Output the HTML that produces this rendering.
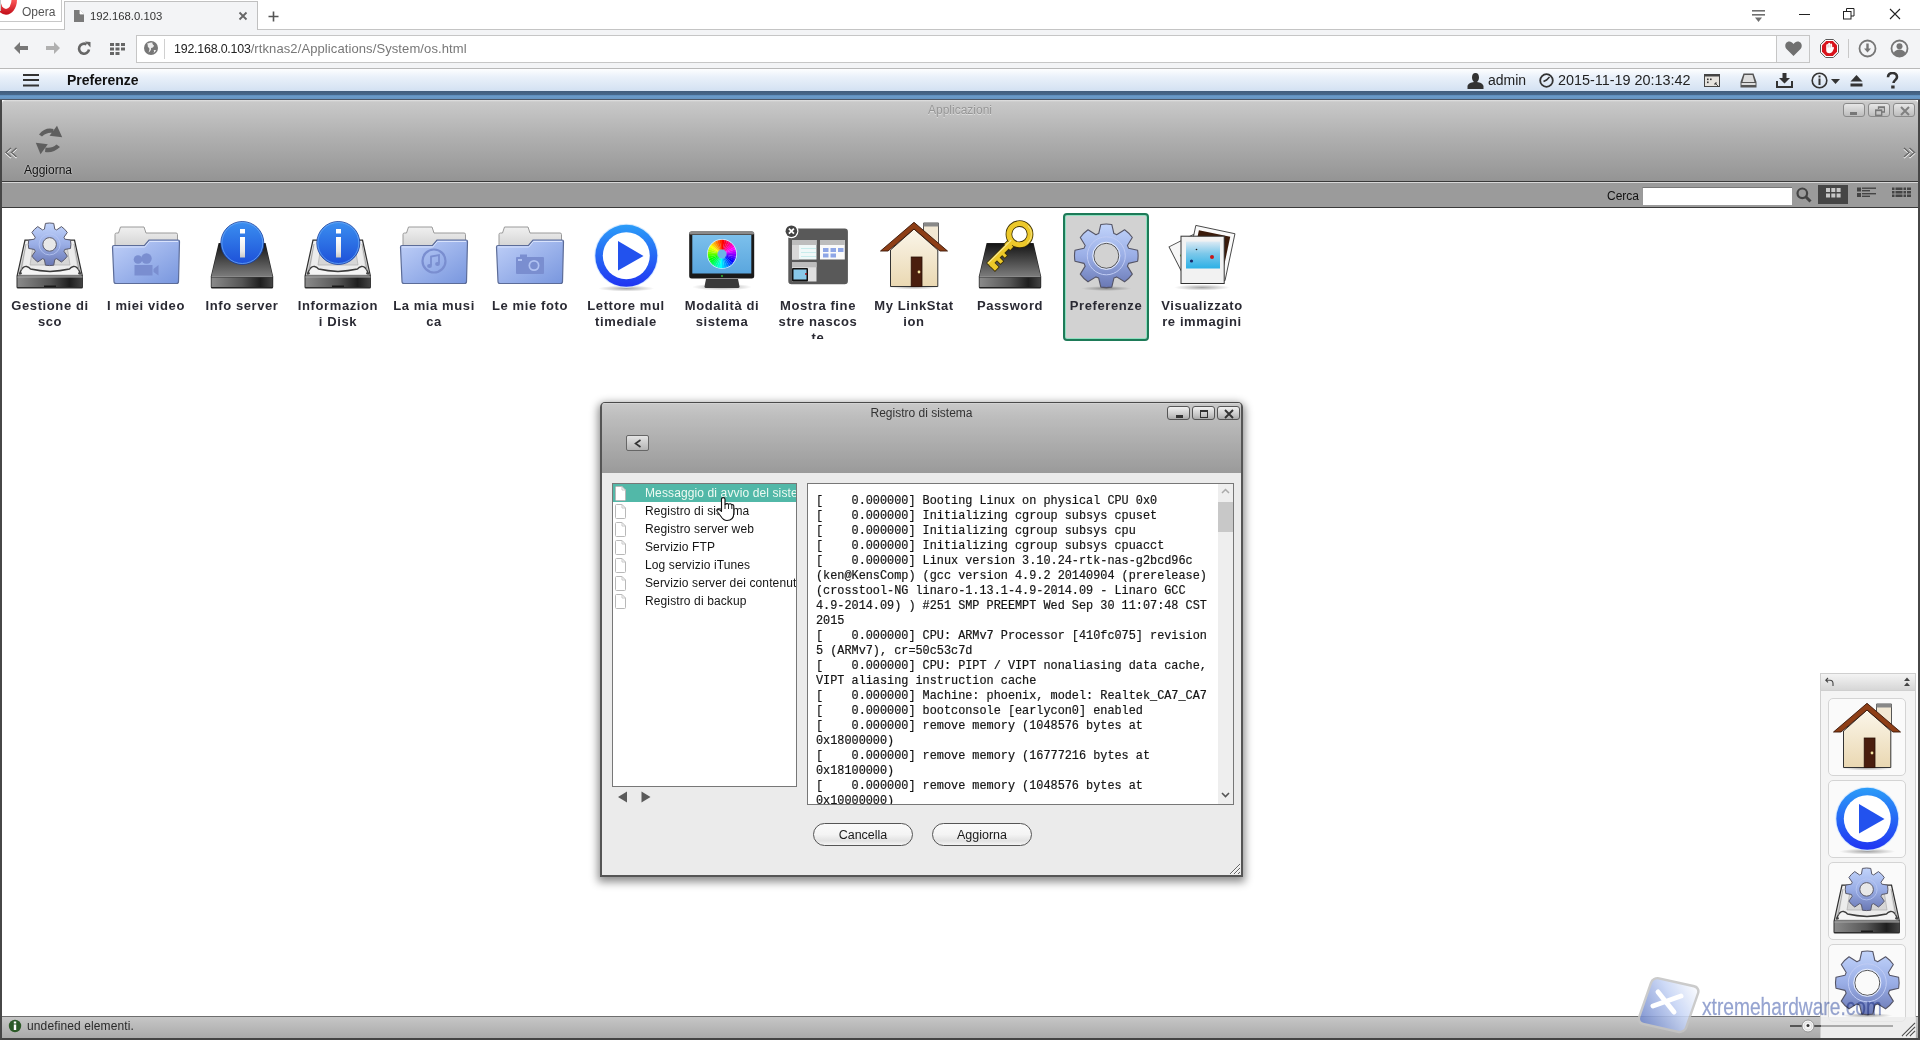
<!DOCTYPE html>
<html><head><meta charset="utf-8">
<style>
*{box-sizing:border-box;margin:0;padding:0}
html,body{width:1920px;height:1040px;overflow:hidden;background:#fff;font-family:"Liberation Sans",sans-serif;position:relative}
.a{position:absolute}
/* browser chrome */
#tabstrip{left:0;top:0;width:1920px;height:30px;background:#fff;border-bottom:1px solid #c4c4c4}
#toolbar{left:0;top:30px;width:1920px;height:39px;background:#f3f4f6;border-bottom:1px solid #b9b9b9}
#nashead{left:0;top:69px;width:1920px;height:22px;background:linear-gradient(#fdfeff 0,#eaf1fa 35%,#d3e1f2 100%)}
#bluebar{left:0;top:91px;width:1920px;height:9px;background:linear-gradient(#415c7b 0,#47678a 40%,#5f8fbe 50%,#6b9ac8 60%,#6593c0 88%,#4d5868 89%,#4d5868 100%)}
#win{left:0;top:100px;width:1920px;height:940px;background:#fff}
#wintool{left:2px;top:100px;width:1916px;height:81px;background:linear-gradient(#e2e2e2 0,#c9c9c9 2px,#b0b0b0 45%,#949494 100%);border-radius:4px 4px 0 0}
#search{left:2px;top:181px;width:1916px;height:27px;background:#9b9b9b;border-top:1px solid #3a3a3a;border-bottom:1px solid #3a3a3a;box-shadow:inset 0 1px 0 #d8d8d8}
#leftedge{left:0;top:100px;width:2px;height:940px;background:#474747}
#rightedge{left:1918px;top:100px;width:2px;height:940px;background:#474747}
#status{left:2px;top:1016px;width:1916px;height:24px;background:linear-gradient(#c2c2c2,#9f9f9f);border-top:1px solid #7a7a7a}
.wbtn{width:22px;height:14px;border:1px solid #8a8a8a;border-radius:3px;background:linear-gradient(#e6e6e6,#bcbcbc)}
.lbl{width:96px;text-align:center;font-size:13px;font-weight:bold;color:#2a2a33;line-height:16px;letter-spacing:0.6px}
.wbtn2{width:23px;height:14px;border:1px solid #555;border-radius:3px;background:linear-gradient(#f0f0f0,#c4c4c4 70%,#aaa)}
.pill{width:100px;height:23px;border:1px solid #555;border-radius:12px;background:linear-gradient(#fafafa,#f4f4f4 50%,#e2e2e2 80%,#f4f4f4);text-align:center;font-size:12.5px;line-height:22px;color:#1a1a1a}
</style></head><body>
<div id="tabstrip" class="a"></div>
<div id="toolbar" class="a"></div>
<div id="nashead" class="a"></div>
<div id="bluebar" class="a"></div>

<!-- tab strip -->
<div class="a" style="left:0;top:0;width:62px;height:22px;border:1px solid #c8c8c8;border-left:none;border-top:none;background:#fff"></div>
<svg class="a" style="left:0;top:0" width="18" height="17" viewBox="0 0 18 17"><defs><linearGradient id="og" x1="0" y1="0" x2="0" y2="1"><stop offset="0" stop-color="#ff5a5a"/><stop offset="1" stop-color="#c00c18"/></linearGradient></defs><path d="M-5 -0.5A11 15.3 0 0 0 17 -0.5Z" fill="url(#og)"/><path d="M0.5 -0.5A5.5 9.5 0 0 0 11.5 -0.5Z" fill="#fff"/><rect x="0" y="0" width="1" height="11" fill="#c8c8c8"/></svg>
<div class="a" style="left:22px;top:5px;font-size:12px;color:#555">Opera</div>
<div class="a" style="left:64px;top:1px;width:194px;height:29px;background:#f3f4f6;border:1px solid #c0c0c0;border-bottom:none"></div>
<svg class="a" style="left:74px;top:10px" width="10" height="12" viewBox="0 0 10 12"><path d="M0 0H6L10 4V12H0Z" fill="#7a7a7a"/><path d="M6 0V4H10" fill="#fff" stroke="#fff" stroke-width="0.8"/></svg>
<div class="a" style="left:90px;top:10px;font-size:11.3px;color:#333">192.168.0.103</div>
<svg class="a" style="left:238px;top:11px" width="10" height="10" viewBox="0 0 10 10"><path d="M1.5 1.5L8.5 8.5M8.5 1.5L1.5 8.5" stroke="#666" stroke-width="1.8"/></svg>
<svg class="a" style="left:268px;top:11px" width="11" height="11" viewBox="0 0 11 11"><path d="M5.5 0.5V10.5M0.5 5.5H10.5" stroke="#555" stroke-width="1.6"/></svg>
<svg class="a" style="left:1752px;top:10px" width="14" height="13" viewBox="0 0 14 13"><rect x="0" y="0" width="13" height="1.6" fill="#6f6f6f"/><rect x="0" y="4" width="13" height="1.6" fill="#6f6f6f"/><path d="M3 7.5H10L6.5 12Z" fill="#6f6f6f"/></svg>
<div class="a" style="left:1799px;top:14px;width:11px;height:1px;background:#222"></div>
<svg class="a" style="left:1843px;top:8px" width="12" height="12" viewBox="0 0 12 12"><rect x="0.5" y="3.5" width="7.5" height="7.5" fill="none" stroke="#222"/><path d="M3.5 3.5V0.5H11V8H8" fill="none" stroke="#222"/></svg>
<svg class="a" style="left:1889px;top:8px" width="12" height="12" viewBox="0 0 12 12"><path d="M1 1L11 11M11 1L1 11" stroke="#222" stroke-width="1.1"/></svg>
<!-- toolbar icons -->
<svg class="a" style="left:14px;top:42px" width="15" height="12" viewBox="0 0 15 12"><path d="M0 6L6 0V4H14V8H6V12Z" fill="#777"/></svg>
<svg class="a" style="left:45px;top:42px" width="15" height="12" viewBox="0 0 15 12"><path d="M15 6L9 0V4H1V8H9V12Z" fill="#b0b0b0"/></svg>
<svg class="a" style="left:77px;top:41px" width="15" height="15" viewBox="0 0 15 15"><path d="M12 8.5A5 5 0 1 1 9.5 3.3" fill="none" stroke="#666" stroke-width="2.6"/><path d="M8 0.5L13.5 1V6.5Z" fill="#666"/></svg>
<svg class="a" style="left:110px;top:43px" width="15" height="12" viewBox="0 0 15 12"><g fill="#666"><rect x="0" y="0" width="4" height="3"/><rect x="5.5" y="0" width="4" height="3"/><rect x="11" y="0" width="4" height="3"/><rect x="0" y="4.5" width="4" height="3"/><rect x="5.5" y="4.5" width="4" height="3"/><rect x="11" y="4.5" width="4" height="3"/><rect x="0" y="9" width="4" height="3"/><rect x="5.5" y="9" width="4" height="3"/></g></svg>
<div class="a" style="left:136px;top:35px;width:1641px;height:28px;background:#fff;border:1px solid #c6c6c6"></div>
<div class="a" style="left:1776px;top:35px;width:34px;height:28px;background:#f3f4f6;border:1px solid #c6c6c6"></div>
<svg class="a" style="left:143px;top:40px" width="16" height="16" viewBox="0 0 16 16"><circle cx="8" cy="8" r="7" fill="#777"/><path d="M4 3.5C5.5 5 4 6.5 5.5 7.5C7 8.5 6.5 10 5.5 12.5C7.5 11 8.5 9.5 8 8C10 8 10.5 7 11 5.5C9.5 4.5 9 3 9.5 2.5C7.5 2.5 6 3 4 3.5Z" fill="#eee"/><path d="M10.5 10C11.5 11 11 12.5 10 13C11.5 12.5 12.5 11.5 13 10Z" fill="#eee"/></svg>
<div class="a" style="left:164px;top:39px;width:1px;height:20px;background:#d0d0d0"></div>
<div class="a" style="left:174px;top:41px;font-size:13px;color:#222;white-space:pre"><span style="font-size:12.4px;letter-spacing:-0.2px">192.168.0.103</span><span style="color:#777;letter-spacing:0.1px">/rtknas2/Applications/System/os.html</span></div>
<svg class="a" style="left:1785px;top:41px" width="17" height="15" viewBox="0 0 17 15"><path d="M8.5 15L1.5 8C-0.5 6 0 2 2.5 1C4.8 0 7 1 8.5 3C10 1 12.2 0 14.5 1C17 2 17.5 6 15.5 8Z" fill="#707070"/></svg>
<svg class="a" style="left:1820px;top:39px" width="20" height="20" viewBox="0 0 20 20"><path d="M5.6 0.5H13.4L18.5 5.6V13.4L13.4 18.5H5.6L0.5 13.4V5.6Z" fill="#fff" stroke="#5a5a5a" stroke-width="1"/><path d="M6.2 2H12.8L17 6.2V12.8L12.8 17H6.2L2 12.8V6.2Z" fill="#d8141c"/><path d="M6.2 6.5Q6.2 5 7.2 5Q8 5 8.1 6V5Q8.2 3.8 9.2 3.8Q10.2 3.8 10.2 5V5.5Q10.4 4.5 11.3 4.6Q12.2 4.7 12.2 6V8.5Q12.6 7.6 13.4 7.9Q14.3 8.3 13.9 9.5L12.5 12.5Q11.5 14.2 9.5 14.2Q6.2 14.2 6.2 11Z" fill="#fff"/><path d="M8.1 6V8.5M10.2 5.5V8.5" stroke="#c8a0a0" stroke-width="0.7"/></svg>
<div class="a" style="left:1848px;top:39px;width:1px;height:19px;background:#c8c8c8"></div>
<svg class="a" style="left:1858px;top:39px" width="19" height="19" viewBox="0 0 19 19"><circle cx="9.5" cy="9.5" r="8" fill="none" stroke="#767676" stroke-width="1.8"/><path d="M8.3 4.5H10.7V9.5H13L9.5 13.5L6 9.5H8.3Z" fill="#767676"/></svg>
<svg class="a" style="left:1890px;top:39px" width="19" height="19" viewBox="0 0 19 19"><circle cx="9.5" cy="9.5" r="8" fill="none" stroke="#767676" stroke-width="1.8"/><circle cx="9.5" cy="7.2" r="3" fill="#767676"/><path d="M3.5 14.5C4.5 11.5 7 10.5 9.5 10.5C12 10.5 14.5 11.5 15.5 14.5C14 16.5 12 17.5 9.5 17.5C7 17.5 5 16.5 3.5 14.5Z" fill="#767676"/></svg>
<!-- NAS header -->
<svg class="a" style="left:23px;top:74px" width="16" height="13" viewBox="0 0 16 13"><rect x="0" y="0" width="16" height="2" fill="#333"/><rect x="0" y="5" width="16" height="2" fill="#333"/><rect x="0" y="10.5" width="16" height="2" fill="#333"/></svg>
<div class="a" style="left:67px;top:72px;font-size:14px;font-weight:bold;color:#111">Preferenze</div>
<svg class="a" style="left:1467px;top:73px" width="17" height="16" viewBox="0 0 17 16"><path d="M8.5 0C6 0 5 2 5 4.5C5 6.5 6 8 7 9C4 9.5 1 10.5 0.5 13V16H16.5V13C16 10.5 13 9.5 10 9C11 8 12 6.5 12 4.5C12 2 11 0 8.5 0Z" fill="#333"/></svg>
<div class="a" style="left:1488px;top:72px;font-size:14px;color:#222">admin</div>
<svg class="a" style="left:1539px;top:73px" width="15" height="15" viewBox="0 0 15 15"><circle cx="7.5" cy="7.5" r="6.3" fill="none" stroke="#333" stroke-width="1.8"/><path d="M4.5 8.5L7.5 7L10.5 4" fill="none" stroke="#333" stroke-width="1.6"/></svg>
<div class="a" style="left:1558px;top:72px;font-size:14.4px;color:#222">2015-11-19 20:13:42</div>
<svg class="a" style="left:1704px;top:74px" width="17" height="14" viewBox="0 0 17 14"><rect x="0.5" y="0.5" width="15" height="12" fill="#e6e3de" stroke="#444"/><rect x="0.5" y="0.5" width="15" height="2" fill="#444"/><rect x="3" y="4.5" width="1.6" height="1.6" fill="#333"/><rect x="6" y="4.5" width="1.6" height="1.6" fill="#333"/><rect x="3" y="7.5" width="1.6" height="1.6" fill="#333"/><path d="M11 9L14.5 12.5M11 9V11M11 9H13" stroke="#333" stroke-width="0.9" fill="none"/></svg>
<svg class="a" style="left:1740px;top:73px" width="17" height="15" viewBox="0 0 17 15"><path d="M3.5 0.5H13.5L16.5 9V14.5H0.5V9Z" fill="#555"/><path d="M4.5 2H12.5L14.5 9H2.5Z" fill="#ddd"/><rect x="1.5" y="10" width="14" height="2" fill="#ddd"/></svg>
<svg class="a" style="left:1776px;top:73px" width="17" height="15" viewBox="0 0 17 15"><path d="M6.5 0H10.5V5H14L8.5 10.5L3 5H6.5Z" fill="#333"/><path d="M1 8V14H16V8" fill="none" stroke="#333" stroke-width="2"/></svg>
<svg class="a" style="left:1811px;top:72px" width="30" height="17" viewBox="0 0 30 17"><circle cx="8.5" cy="8.5" r="7.3" fill="none" stroke="#333" stroke-width="1.6"/><rect x="7.5" y="6.5" width="2" height="6.5" fill="#333"/><rect x="7.5" y="3.5" width="2" height="2" fill="#333"/><path d="M20 7H29L24.5 12Z" fill="#333"/></svg>
<svg class="a" style="left:1850px;top:75px" width="13" height="12" viewBox="0 0 13 12"><path d="M6.5 0L12.5 6.5H0.5Z" fill="#333"/><rect x="0.5" y="8.5" width="12" height="3" fill="#333"/></svg>
<svg class="a" style="left:1886px;top:72px" width="13" height="17" viewBox="0 0 13 17"><path d="M2 5.2C2 2.5 4 1 6.5 1C9 1 11 2.5 11 5C11 8 7.5 8.2 7.5 11" fill="none" stroke="#333" stroke-width="2.6"/><rect x="5.2" y="13.5" width="3.4" height="3" fill="#333"/></svg>
<div id="win" class="a"></div>
<div id="wintool" class="a"></div>
<div id="search" class="a"></div>

<div class="a" style="left:902px;top:103px;width:116px;text-align:center;font-size:12px;color:#979797;text-shadow:0 1px 0 #ddd">Applicazioni</div>
<div class="a wbtn" style="left:1843px;top:103px"><div style="position:absolute;left:6px;top:8px;width:7px;height:3px;background:#777"></div></div>
<div class="a wbtn" style="left:1868px;top:103px"><svg style="position:absolute;left:6px;top:2px" width="10" height="10" viewBox="0 0 10 10"><path d="M3.5 3V1H9.5V6H7" fill="none" stroke="#777" stroke-width="1.3"/><rect x="0.7" y="4" width="6" height="5.3" fill="none" stroke="#777" stroke-width="1.3"/><rect x="3.5" y="1" width="6" height="1.2" fill="#777"/><rect x="0.7" y="4" width="6" height="1.2" fill="#777"/></svg></div>
<div class="a wbtn" style="left:1893px;top:103px"><svg style="position:absolute;left:6px;top:2px" width="10" height="10" viewBox="0 0 10 10"><path d="M1 1L9 9M9 1L1 9" stroke="#808080" stroke-width="2"/></svg></div>
<svg class="a" style="left:4px;top:147px" width="15" height="12" viewBox="0 0 15 12"><path d="M7 1L2 5.5L7 10M12.5 1L7.5 5.5L12.5 10" fill="none" stroke="#fff" stroke-width="1.4" transform="translate(0,1)"/><path d="M7 1L2 5.5L7 10M12.5 1L7.5 5.5L12.5 10" fill="none" stroke="#666" stroke-width="1.4"/></svg>
<svg class="a" style="left:1902px;top:147px" width="15" height="12" viewBox="0 0 15 12"><path d="M2 1L7 5.5L2 10M7.5 1L12.5 5.5L7.5 10" fill="none" stroke="#fff" stroke-width="1.4" transform="translate(0,1)"/><path d="M2 1L7 5.5L2 10M7.5 1L12.5 5.5L7.5 10" fill="none" stroke="#666" stroke-width="1.4"/></svg>
<svg class="a" style="left:35px;top:125px" width="28" height="30" viewBox="0 0 28 30"><g fill="#5f5f5f"><path d="M4 9.5Q10 2 18.5 4L18 8Q12 7 7 11.5Z"/><path d="M22 0.8L27.2 12.2L14.5 10.8Z"/><path d="M10 27Q18 28.5 25 22L21.5 19.5Q17 23.5 10.5 22.5Z"/><path d="M0.8 17.8L12.8 19.3L5.5 29.2Z"/></g></svg>
<div class="a" style="left:24px;top:163px;font-size:12px;color:#111;text-shadow:0 0 2px #ddd">Aggiorna</div>
<!-- search bar -->
<div class="a" style="left:1607px;top:189px;font-size:12px;color:#111">Cerca</div>
<div class="a" style="left:1642px;top:187px;width:150px;height:18px;background:#fff;border-top:1px solid #777;border-left:1px solid #999"></div>
<svg class="a" style="left:1796px;top:187px" width="16" height="16" viewBox="0 0 16 16"><circle cx="6.3" cy="6.3" r="4.8" fill="none" stroke="#444" stroke-width="2.2"/><path d="M9.5 9.5L14.5 14.5" stroke="#444" stroke-width="3"/></svg>
<div class="a" style="left:1818px;top:185px;width:30px;height:19px;background:#454545"><svg style="position:absolute;left:8px;top:3px" width="15" height="10" viewBox="0 0 15 10"><g fill="#c8c8c8"><rect x="0" y="0" width="4" height="4"/><rect x="5.3" y="0" width="4" height="4"/><rect x="10.6" y="0" width="4" height="4"/><rect x="0" y="5.5" width="4" height="4"/><rect x="5.3" y="5.5" width="4" height="4"/><rect x="10.6" y="5.5" width="4" height="4"/></g></svg></div>
<svg class="a" style="left:1857px;top:187px" width="20" height="11" viewBox="0 0 20 11"><g fill="#444"><rect x="0" y="0.5" width="4" height="4"/><rect x="0" y="6" width="4" height="4"/><rect x="5" y="0.5" width="14" height="1.4"/><rect x="5" y="3" width="8" height="1.4"/><rect x="5" y="6" width="14" height="1.4"/><rect x="5" y="8.6" width="8" height="1.4"/></g></svg>
<svg class="a" style="left:1892px;top:187px" width="19" height="11" viewBox="0 0 19 11"><g fill="#444"><rect x="0" y="0.5" width="2.5" height="2.5"/><rect x="3.5" y="0.5" width="7" height="2.5"/><rect x="11.5" y="0.5" width="2.5" height="2.5"/><rect x="15" y="0.5" width="4" height="2.5"/><rect x="0" y="4" width="2.5" height="2.5"/><rect x="3.5" y="4" width="7" height="2.5"/><rect x="11.5" y="4" width="2.5" height="2.5"/><rect x="15" y="4" width="4" height="2.5"/><rect x="0" y="7.5" width="2.5" height="2.5"/><rect x="3.5" y="7.5" width="7" height="2.5"/><rect x="11.5" y="7.5" width="2.5" height="2.5"/><rect x="15" y="7.5" width="4" height="2.5"/></g></svg>
<!--ICONS--><div class="a" style="left:1063px;top:213px;width:86px;height:128px;background:#d2d2d2;border:2px solid #1e7a58;border-radius:4px;box-shadow:inset 0 0 0 1px #8fe0c0"></div><svg width="0" height="0" style="position:absolute">
<defs>
<linearGradient id="gearg" x1="0" y1="0" x2="0" y2="1"><stop offset="0" stop-color="#c2d4fb"/><stop offset="0.5" stop-color="#9aaee6"/><stop offset="1" stop-color="#6a78b4"/></linearGradient>
<linearGradient id="bluec" x1="0" y1="0" x2="0" y2="1"><stop offset="0" stop-color="#3b8ff0"/><stop offset="1" stop-color="#1d50d8"/></linearGradient>
<linearGradient id="ibar" x1="0" y1="0" x2="0" y2="1"><stop offset="0" stop-color="#fff"/><stop offset="0.7" stop-color="#e8e8e8"/><stop offset="1" stop-color="#c8c8c8"/></linearGradient>
<linearGradient id="bdtop" x1="0" y1="0" x2="0" y2="1"><stop offset="0" stop-color="#141414"/><stop offset="1" stop-color="#7a7a7a"/></linearGradient>
<linearGradient id="dfront" x1="0" y1="0" x2="1" y2="0"><stop offset="0" stop-color="#8a8a8a"/><stop offset="0.5" stop-color="#555"/><stop offset="0.8" stop-color="#1e1e1e"/><stop offset="1" stop-color="#444"/></linearGradient>
<linearGradient id="sdtop" x1="0" y1="0" x2="0" y2="1"><stop offset="0" stop-color="#f2f2f2"/><stop offset="1" stop-color="#c4c4c4"/></linearGradient>
<linearGradient id="fold" x1="0" y1="0" x2="1" y2="1"><stop offset="0" stop-color="#c0d0f8"/><stop offset="1" stop-color="#7896de"/></linearGradient>
<linearGradient id="paper" x1="0" y1="0" x2="0" y2="1"><stop offset="0" stop-color="#f0f0f0"/><stop offset="1" stop-color="#c8c8c8"/></linearGradient>
<linearGradient id="playg" x1="0" y1="0" x2="0" y2="1"><stop offset="0" stop-color="#2b9cf8"/><stop offset="1" stop-color="#2034f2"/></linearGradient>
<linearGradient id="scr" x1="0" y1="0" x2="0" y2="1"><stop offset="0" stop-color="#7cc0ec"/><stop offset="1" stop-color="#5aa6de"/></linearGradient>
<linearGradient id="house" x1="0" y1="0" x2="0" y2="1"><stop offset="0" stop-color="#fbf6ea"/><stop offset="1" stop-color="#ead8b2"/></linearGradient>
<linearGradient id="photo" x1="0" y1="0" x2="0" y2="1"><stop offset="0" stop-color="#dceaf4"/><stop offset="0.45" stop-color="#7cc8ea"/><stop offset="1" stop-color="#2cb0e6"/></linearGradient>
<radialGradient id="shad" cx="0.5" cy="0.5" r="0.5"><stop offset="0" stop-color="#000" stop-opacity="0.35"/><stop offset="1" stop-color="#000" stop-opacity="0"/></radialGradient>
<symbol id="sdisk" viewBox="0 0 80 80">
 <path d="M6.5 61L14.5 24.6H65L73 61V72A1.5 1.5 0 0 1 71.5 73.5H8A1.5 1.5 0 0 1 6.5 72Z" fill="#2e2e2e"/>
 <path d="M7.8 60.5L15.5 25.8H64L71.7 60.5Z" fill="url(#sdtop)"/>
 <path d="M17 28H62L68 56H12Z" fill="#ececec"/>
 <path d="M23 31H57L60 50H20Z" fill="#d6d6d6" stroke="#b4b4b4" stroke-width="0.8"/>
 <path d="M9.5 59.5Q12 51 16.5 51.5Q19 52 20.5 54Q30 56 40 56.5Q50 56 59.5 54Q61 52 63.5 51.5Q68 51 70.5 59.5" fill="#f4f4f4" stroke="#3c3c3c" stroke-width="1.3"/>
 <path d="M16 29L11 55M64 29L69 55" stroke="#9a9a9a" stroke-width="0.8"/>
 <path d="M7.5 61.5H72.5V72H7.5Z" fill="url(#dfront)"/>
 <rect x="7.5" y="61.3" width="65" height="1.2" fill="#a8a8a8"/>
 <rect x="34" y="70.5" width="12" height="1.5" fill="#1a1a1a"/>
 <circle cx="10.5" cy="58.2" r="1.3" fill="#444"/><circle cx="69.5" cy="58.2" r="1.3" fill="#444"/>
</symbol>
<symbol id="bdisk" viewBox="0 0 80 80">
 <path d="M8.8 61.5L16.6 28H63.6L71.2 61.5V72A1.5 1.5 0 0 1 69.7 73.5H10.3A1.5 1.5 0 0 1 8.8 72Z" fill="#222"/>
 <path d="M9.5 61L17.2 28.7H63L70.5 61Z" fill="url(#bdtop)"/>
 <rect x="9.5" y="61" width="61" height="1.2" fill="#8a8a8a"/>
 <path d="M9.5 62.5H70.5V72H9.5Z" fill="url(#dfront)"/>
</symbol>
<symbol id="folder" viewBox="0 0 80 80">
 <path d="M9 19.5Q9 18 10.5 18H12.5L14.5 12H38L40 18H70Q71.5 18 71.5 19.5V40H9Z" fill="url(#paper)" stroke="#9a9a9a" stroke-width="1"/>
 <path d="M6.5 32Q6.5 30.5 8 30.5H38.5L43 25H72Q73.5 25 73.5 26.5L72.5 66.5Q72.5 68.5 70.5 68.5H10Q8 68.5 8 66.5Z" fill="url(#fold)" stroke="#5c6c98" stroke-width="1.2"/>
 <path d="M8 32H38.8L43.3 26.5H72" fill="none" stroke="#d8e2fc" stroke-width="1"/>
</symbol>
<symbol id="gear1" viewBox="0 0 80 80"><path d="M34.42 14.16L35.44 8.41A21.3 21.3 0 0 1 43.76 8.41L44.78 14.16A16 16 0 0 1 46.64 14.93L51.43 11.59A21.3 21.3 0 0 1 57.31 17.47L53.97 22.26A16 16 0 0 1 54.74 24.12L60.49 25.14A21.3 21.3 0 0 1 60.49 33.46L54.74 34.48A16 16 0 0 1 53.97 36.34L57.31 41.13A21.3 21.3 0 0 1 51.43 47.01L46.64 43.67A16 16 0 0 1 44.78 44.44L43.76 50.19A21.3 21.3 0 0 1 35.44 50.19L34.42 44.44A16 16 0 0 1 32.56 43.67L27.77 47.01A21.3 21.3 0 0 1 21.89 41.13L25.23 36.34A16 16 0 0 1 24.46 34.48L18.71 33.46A21.3 21.3 0 0 1 18.71 25.14L24.46 24.12A16 16 0 0 1 25.23 22.26L21.89 17.47A21.3 21.3 0 0 1 27.77 11.59L32.56 14.93A16 16 0 0 1 34.42 14.16Z" fill="url(#gearg)" stroke="#5a5a6a" stroke-width="1" stroke-linejoin="round"/><circle cx="39.6" cy="29.4" r="10.5" fill="none" stroke="#b8c6f2" stroke-width="0.8"/><circle cx="39.6" cy="29.4" r="6.8" fill="#e8e8e8" stroke="#5a5a6a" stroke-width="1"/></symbol>
<symbol id="info" viewBox="0 0 80 80"><circle cx="40.3" cy="28" r="21.5" fill="url(#bluec)" stroke="#1b3f9a" stroke-width="0.8"/><circle cx="40.3" cy="28" r="20.5" fill="none" stroke="#6aa8f4" stroke-width="0.8"/><rect x="38" y="14" width="5" height="4.5" fill="#fff"/><rect x="38" y="22" width="5" height="20.5" fill="url(#ibar)"/></symbol>
</defs></svg><svg class="a" style="left:10px;top:215px" width="80" height="80" viewBox="0 0 80 80"><use href="#sdisk"/><use href="#gear1"/></svg><svg class="a" style="left:106px;top:215px" width="80" height="80" viewBox="0 0 80 80"><use href="#folder"/><g fill="#7a8ed0"><circle cx="32" cy="44.5" r="4.3"/><circle cx="40.5" cy="43.5" r="5.2"/><rect x="28.5" y="50" width="18" height="10.5"/><path d="M47.5 54L52.5 50V60.5L47.5 57Z"/></g></svg><svg class="a" style="left:202px;top:215px" width="80" height="80" viewBox="0 0 80 80"><use href="#bdisk"/><use href="#info"/></svg><svg class="a" style="left:298px;top:215px" width="80" height="80" viewBox="0 0 80 80"><use href="#sdisk"/><use href="#info"/></svg><svg class="a" style="left:394px;top:215px" width="80" height="80" viewBox="0 0 80 80"><use href="#folder"/><circle cx="40" cy="46" r="11.5" fill="none" stroke="#7a8ed0" stroke-width="2.2"/><path d="M37 50.5V41.5L45 40V48.5" fill="none" stroke="#7a8ed0" stroke-width="1.8"/><ellipse cx="35.5" cy="51" rx="2.4" ry="2" fill="#7a8ed0"/><ellipse cx="43.5" cy="49" rx="2.4" ry="2" fill="#7a8ed0"/></svg><svg class="a" style="left:490px;top:215px" width="80" height="80" viewBox="0 0 80 80"><use href="#folder"/><g fill="#7a8ed0"><rect x="26" y="42" width="28" height="17" rx="1"/><rect x="30" y="39.5" width="7" height="3"/></g><circle cx="44" cy="50.5" r="5.5" fill="#b0c2f2"/><circle cx="44" cy="50.5" r="3.8" fill="#7a8ed0"/><rect x="28" y="44" width="4" height="2" fill="#b0c2f2"/></svg><svg class="a" style="left:586px;top:215px" width="80" height="80" viewBox="0 0 80 80"><ellipse cx="40.3" cy="73.5" rx="28" ry="3" fill="url(#shad)"/><circle cx="40.3" cy="40.8" r="32" fill="#d4e8ff"/><circle cx="40.3" cy="40.8" r="31" fill="url(#playg)"/><circle cx="40.3" cy="40.8" r="23.5" fill="#fff"/><path d="M32 26L57.5 41L32 55.5Z" fill="#2252ee"/></svg><svg class="a" style="left:682px;top:215px" width="80" height="80" viewBox="0 0 80 80"><ellipse cx="40" cy="72" rx="30" ry="3.5" fill="url(#shad)"/><path d="M24 64H56L57.5 71.5Q57.5 73 56 73H24Q22.5 73 22.5 71.5Z" fill="#3a3a3a"/><rect x="7.2" y="16.5" width="65" height="47" rx="2.5" fill="#1a1a1a"/><rect x="7.2" y="16.5" width="65" height="3" rx="1.5" fill="#8a8a8a"/><rect x="10.3" y="20" width="59" height="38.5" fill="url(#scr)"/><circle cx="40" cy="61" r="0.9" fill="#3c3"/><g transform="translate(40 39)"><circle r="15" fill="#d8f0ff"/><path d="M0 0L0.00 -14.20A14.2 14.2 0 0 1 2.61 -13.96Z" fill="hsl(0,100%,50%)"/><path d="M0 0L2.47 -13.98A14.2 14.2 0 0 1 5.00 -13.29Z" fill="hsl(350,100%,50%)"/><path d="M0 0L4.86 -13.34A14.2 14.2 0 0 1 7.23 -12.22Z" fill="hsl(340,100%,50%)"/><path d="M0 0L7.10 -12.30A14.2 14.2 0 0 1 9.24 -10.78Z" fill="hsl(330,100%,50%)"/><path d="M0 0L9.13 -10.88A14.2 14.2 0 0 1 10.97 -9.01Z" fill="hsl(320,100%,50%)"/><path d="M0 0L10.88 -9.13A14.2 14.2 0 0 1 12.37 -6.97Z" fill="hsl(310,100%,50%)"/><path d="M0 0L12.30 -7.10A14.2 14.2 0 0 1 13.39 -4.72Z" fill="hsl(300,100%,50%)"/><path d="M0 0L13.34 -4.86A14.2 14.2 0 0 1 14.01 -2.32Z" fill="hsl(290,100%,50%)"/><path d="M0 0L13.98 -2.47A14.2 14.2 0 0 1 14.20 0.15Z" fill="hsl(280,100%,50%)"/><path d="M0 0L14.20 -0.00A14.2 14.2 0 0 1 13.96 2.61Z" fill="hsl(270,100%,50%)"/><path d="M0 0L13.98 2.47A14.2 14.2 0 0 1 13.29 5.00Z" fill="hsl(260,100%,50%)"/><path d="M0 0L13.34 4.86A14.2 14.2 0 0 1 12.22 7.23Z" fill="hsl(250,100%,50%)"/><path d="M0 0L12.30 7.10A14.2 14.2 0 0 1 10.78 9.24Z" fill="hsl(240,100%,50%)"/><path d="M0 0L10.88 9.13A14.2 14.2 0 0 1 9.01 10.97Z" fill="hsl(230,100%,50%)"/><path d="M0 0L9.13 10.88A14.2 14.2 0 0 1 6.97 12.37Z" fill="hsl(220,100%,50%)"/><path d="M0 0L7.10 12.30A14.2 14.2 0 0 1 4.72 13.39Z" fill="hsl(210,100%,50%)"/><path d="M0 0L4.86 13.34A14.2 14.2 0 0 1 2.32 14.01Z" fill="hsl(200,100%,50%)"/><path d="M0 0L2.47 13.98A14.2 14.2 0 0 1 -0.15 14.20Z" fill="hsl(190,100%,50%)"/><path d="M0 0L0.00 14.20A14.2 14.2 0 0 1 -2.61 13.96Z" fill="hsl(180,100%,50%)"/><path d="M0 0L-2.47 13.98A14.2 14.2 0 0 1 -5.00 13.29Z" fill="hsl(170,100%,50%)"/><path d="M0 0L-4.86 13.34A14.2 14.2 0 0 1 -7.23 12.22Z" fill="hsl(160,100%,50%)"/><path d="M0 0L-7.10 12.30A14.2 14.2 0 0 1 -9.24 10.78Z" fill="hsl(150,100%,50%)"/><path d="M0 0L-9.13 10.88A14.2 14.2 0 0 1 -10.97 9.01Z" fill="hsl(140,100%,50%)"/><path d="M0 0L-10.88 9.13A14.2 14.2 0 0 1 -12.37 6.97Z" fill="hsl(130,100%,50%)"/><path d="M0 0L-12.30 7.10A14.2 14.2 0 0 1 -13.39 4.72Z" fill="hsl(120,100%,50%)"/><path d="M0 0L-13.34 4.86A14.2 14.2 0 0 1 -14.01 2.32Z" fill="hsl(110,100%,50%)"/><path d="M0 0L-13.98 2.47A14.2 14.2 0 0 1 -14.20 -0.15Z" fill="hsl(100,100%,50%)"/><path d="M0 0L-14.20 0.00A14.2 14.2 0 0 1 -13.96 -2.61Z" fill="hsl(90,100%,50%)"/><path d="M0 0L-13.98 -2.47A14.2 14.2 0 0 1 -13.29 -5.00Z" fill="hsl(80,100%,50%)"/><path d="M0 0L-13.34 -4.86A14.2 14.2 0 0 1 -12.22 -7.23Z" fill="hsl(70,100%,50%)"/><path d="M0 0L-12.30 -7.10A14.2 14.2 0 0 1 -10.78 -9.24Z" fill="hsl(60,100%,50%)"/><path d="M0 0L-10.88 -9.13A14.2 14.2 0 0 1 -9.01 -10.97Z" fill="hsl(50,100%,50%)"/><path d="M0 0L-9.13 -10.88A14.2 14.2 0 0 1 -6.97 -12.37Z" fill="hsl(40,100%,50%)"/><path d="M0 0L-7.10 -12.30A14.2 14.2 0 0 1 -4.72 -13.39Z" fill="hsl(30,100%,50%)"/><path d="M0 0L-4.86 -13.34A14.2 14.2 0 0 1 -2.32 -14.01Z" fill="hsl(20,100%,50%)"/><path d="M0 0L-2.47 -13.98A14.2 14.2 0 0 1 0.15 -14.20Z" fill="hsl(10,100%,50%)"/><circle r="4.5" fill="#6cb4e6"/></g></svg><svg class="a" style="left:778px;top:215px" width="80" height="80" viewBox="0 0 80 80"><rect x="9.5" y="12.7" width="61.2" height="57.3" rx="4" fill="#595959" stroke="#fff" stroke-width="1.6"/><rect x="14" y="25" width="24.5" height="19.5" fill="#f0f8f8"/><rect x="14" y="25" width="24.5" height="5" fill="#bdbdbd"/><rect x="14" y="30" width="7" height="14.5" fill="#d8d8d8"/><g fill="#c8ecec"><rect x="23" y="33" width="15" height="1"/><rect x="23" y="37" width="15" height="1"/><rect x="23" y="41" width="15" height="1"/></g><rect x="42" y="25" width="24.8" height="19.5" fill="#fafafa"/><rect x="42" y="25" width="24.8" height="5" fill="#bdbdbd"/><g fill="#8ea6e6"><rect x="45" y="33" width="5.5" height="4"/><rect x="52.5" y="33" width="5.5" height="4"/><rect x="60" y="33" width="5.5" height="4"/><rect x="45" y="38.5" width="5.5" height="4"/><rect x="52.5" y="38.5" width="5.5" height="4"/></g><rect x="14" y="47.3" width="24.5" height="19.2" fill="#e0e0e0"/><rect x="14" y="47.3" width="24.5" height="5" fill="#bdbdbd"/><rect x="14" y="53" width="16" height="13.5" rx="1" fill="#111"/><rect x="15.5" y="54.5" width="13" height="10" fill="#88c8e8"/><circle cx="28" cy="59" r="0.9" fill="#a00"/><circle cx="13.4" cy="16.2" r="7" fill="#fff"/><circle cx="13.4" cy="16.2" r="5.8" fill="#444"/><path d="M10.9 13.7L15.9 18.7M15.9 13.7L10.9 18.7" stroke="#fff" stroke-width="1.8"/></svg><svg class="a" style="left:874px;top:215px" width="80" height="80" viewBox="0 0 80 80"><ellipse cx="40" cy="72" rx="26" ry="2.5" fill="url(#shad)"/><path d="M49.5 8H64.5V30H49.5Z" fill="#f2e8d4" stroke="#444" stroke-width="0.9"/><rect x="49.5" y="8" width="15" height="3.5" fill="#888"/><path d="M16.5 35L40 14L63.8 35V71.5H16.5Z" fill="url(#house)" stroke="#333" stroke-width="1"/><path d="M6.5 36L40 7.3L73.5 36H66L40 14L14 36Z" fill="#8e3e16" stroke="#3a1608" stroke-width="0.9" stroke-linejoin="round"/><rect x="37.2" y="42" width="10.8" height="29.5" fill="#4a1e0e" stroke="#2a1006" stroke-width="0.8"/><circle cx="45" cy="57" r="1.4" fill="#f4e4a0"/></svg><svg class="a" style="left:970px;top:215px" width="80" height="80" viewBox="0 0 80 80"><use href="#bdisk"/><g transform="translate(49.5 19.2) rotate(-45)"><g fill="#3a2e04"><rect x="-44" y="-3.3" width="35" height="6.6" rx="1"/><rect x="-18.5" y="-4.3" width="6" height="9.6"/><rect x="-44" y="1" width="6.8" height="8.3"/><rect x="-35.2" y="1" width="5.4" height="7.3"/><rect x="-27.8" y="1" width="4.6" height="6"/></g><circle r="10.6" fill="none" stroke="#3a2e04" stroke-width="6.6"/><g fill="#ecc82a"><rect x="-43.2" y="-2.5" width="34" height="5" /><rect x="-17.7" y="-3.5" width="4.4" height="8"/><rect x="-43.2" y="1" width="5.2" height="7.5"/><rect x="-34.4" y="1" width="3.8" height="6.5"/><rect x="-27" y="1" width="3" height="5.2"/></g><circle r="10.6" fill="none" stroke="#ecc82a" stroke-width="5"/><circle r="12" fill="none" stroke="#f8e890" stroke-width="0.8" stroke-dasharray="20 80"/><rect x="-43" y="-2.3" width="33" height="1.2" fill="#f8e890"/></g></svg><svg class="a" style="left:1066px;top:215px" width="80" height="80" viewBox="0 0 80 80"><ellipse cx="40.3" cy="73.5" rx="25" ry="2.5" fill="url(#shad)"/><path d="M32.69 18.57L34.83 9.47A31.8 31.8 0 0 1 45.77 9.47L47.91 18.57A23.5 23.5 0 0 1 50.64 19.70L58.59 14.78A31.8 31.8 0 0 1 66.32 22.51L61.40 30.46A23.5 23.5 0 0 1 62.53 33.19L71.63 35.33A31.8 31.8 0 0 1 71.63 46.27L62.53 48.41A23.5 23.5 0 0 1 61.40 51.14L66.32 59.09A31.8 31.8 0 0 1 58.59 66.82L50.64 61.90A23.5 23.5 0 0 1 47.91 63.03L45.77 72.13A31.8 31.8 0 0 1 34.83 72.13L32.69 63.03A23.5 23.5 0 0 1 29.96 61.90L22.01 66.82A31.8 31.8 0 0 1 14.28 59.09L19.20 51.14A23.5 23.5 0 0 1 18.07 48.41L8.97 46.27A31.8 31.8 0 0 1 8.97 35.33L18.07 33.19A23.5 23.5 0 0 1 19.20 30.46L14.28 22.51A31.8 31.8 0 0 1 22.01 14.78L29.96 19.70A23.5 23.5 0 0 1 32.69 18.57Z" fill="url(#gearg)" stroke="#555566" stroke-width="1.1" stroke-linejoin="round"/><circle cx="40.3" cy="40.8" r="19" fill="none" stroke="#c0ccf4" stroke-width="1"/><circle cx="40.3" cy="40.8" r="12.5" fill="#d2d2d2" stroke="#555" stroke-width="1"/><circle cx="40.3" cy="40.8" r="13.6" fill="none" stroke="#e8eefc" stroke-width="1"/></svg><svg class="a" style="left:1162px;top:215px" width="80" height="80" viewBox="0 0 80 80"><ellipse cx="40" cy="72.5" rx="28" ry="3" fill="url(#shad)"/><g transform="rotate(-27 24 30)"><rect x="8" y="24" width="36" height="40" fill="#f6f6f6" stroke="#444" stroke-width="0.9"/><rect x="14" y="36" width="3" height="2" fill="#6a3"/></g><g transform="rotate(12 48 40)"><rect x="28" y="14" width="40" height="48" fill="#fafafa" stroke="#444" stroke-width="0.9"/><rect x="32" y="18" width="32" height="30" fill="#3a1a0a"/></g><rect x="19" y="21.2" width="43.2" height="47.3" fill="#f2f2f2" stroke="#333" stroke-width="1"/><rect x="24" y="26.5" width="34" height="27" fill="url(#photo)"/><circle cx="50" cy="42" r="2" fill="#c81818"/><circle cx="29.5" cy="46" r="1.6" fill="#1a2a6a"/><circle cx="34.5" cy="34.5" r="0.8" fill="#111"/></svg><div class="a lbl" style="left:2px;top:298px;">Gestione di<br>sco</div><div class="a lbl" style="left:98px;top:298px;">I miei video</div><div class="a lbl" style="left:194px;top:298px;">Info server</div><div class="a lbl" style="left:290px;top:298px;">Informazion<br>i Disk</div><div class="a lbl" style="left:386px;top:298px;">La mia musi<br>ca</div><div class="a lbl" style="left:482px;top:298px;">Le mie foto</div><div class="a lbl" style="left:578px;top:298px;">Lettore mul<br>timediale</div><div class="a lbl" style="left:674px;top:298px;">Modalità di<br>sistema</div><div class="a lbl" style="left:770px;top:298px;height:41px;overflow:hidden">Mostra fine<br>stre nascos<br>te</div><div class="a lbl" style="left:866px;top:298px;">My LinkStat<br>ion</div><div class="a lbl" style="left:962px;top:298px;">Password</div><div class="a lbl" style="left:1058px;top:298px;">Preferenze</div><div class="a lbl" style="left:1154px;top:298px;">Visualizzato<br>re immagini</div><!--/ICONS-->
<!--DIALOG-->
<div class="a" style="left:600px;top:402px;width:643px;height:475px;border-radius:5px 5px 0 0;box-shadow:0 3px 9px 2px rgba(0,0,0,0.45)"></div>
<div class="a" style="left:600px;top:402px;width:643px;height:475px;background:#ebebeb;border:2px solid #555;border-top:1px solid #4a4a4a;border-radius:5px 5px 0 0;overflow:hidden">
 <div style="position:absolute;left:0;top:0;width:639px;height:70px;background:linear-gradient(#dedede 0,#c8c8c8 1px,#bdbdbd 20%,#9a9a9a 100%)"></div>
</div>
<div class="a" style="left:600px;top:406px;width:643px;text-align:center;font-size:12px;color:#333">Registro di sistema</div>
<div class="a wbtn2" style="left:1167px;top:406px"><div style="position:absolute;left:8px;top:8px;width:7px;height:2.5px;background:#333"></div></div>
<div class="a wbtn2" style="left:1192px;top:406px"><div style="position:absolute;left:7px;top:2.5px;width:8px;height:8px;border:1.5px solid #333;border-top-width:2.5px"></div></div>
<div class="a wbtn2" style="left:1217px;top:406px"><svg style="position:absolute;left:6px;top:2px" width="10" height="10" viewBox="0 0 10 10"><path d="M1 1L9 9M9 1L1 9" stroke="#333" stroke-width="1.9"/></svg></div>
<div class="a" style="left:626px;top:435px;width:23px;height:16px;border:1px solid #666;border-radius:2px;background:linear-gradient(#e4e4e4,#b4b4b4)"><svg style="position:absolute;left:7px;top:3px" width="8" height="9" viewBox="0 0 8 9"><path d="M6.5 1L1.5 4.5L6.5 8" fill="none" stroke="#333" stroke-width="1.6"/></svg></div>
<div class="a" style="left:612px;top:483px;width:185px;height:304px;background:#fff;border:1px solid #777"></div>
<div class="a" style="left:613px;top:484px;width:183px;height:18px;background:#52b8a8;overflow:hidden;white-space:nowrap"><div style="position:absolute;left:2px;top:2px"><svg width="11" height="15" viewBox="0 0 11 15"><path d="M0.5 1.5Q0.5 0.5 1.5 0.5H7L10.5 4V13.5Q10.5 14.5 9.5 14.5H1.5Q0.5 14.5 0.5 13.5Z" fill="#fff" stroke="#b8b8b8"/><path d="M7 0.5V4H10.5" fill="none" stroke="#c8c8c8"/></svg></div><div style="position:absolute;left:32px;top:2px;font-size:12px;letter-spacing:0.12px;color:#eefaf2">Messaggio di avvio del sistema</div></div><div class="a" style="left:613px;top:502px;width:183px;height:18px;overflow:hidden;white-space:nowrap"><div style="position:absolute;left:2px;top:2px"><svg width="11" height="15" viewBox="0 0 11 15"><path d="M0.5 1.5Q0.5 0.5 1.5 0.5H7L10.5 4V13.5Q10.5 14.5 9.5 14.5H1.5Q0.5 14.5 0.5 13.5Z" fill="#fff" stroke="#b8b8b8"/><path d="M7 0.5V4H10.5" fill="none" stroke="#c8c8c8"/></svg></div><div style="position:absolute;left:32px;top:2px;font-size:12px;letter-spacing:0.12px;color:#151515">Registro di sistema</div></div><div class="a" style="left:613px;top:520px;width:183px;height:18px;overflow:hidden;white-space:nowrap"><div style="position:absolute;left:2px;top:2px"><svg width="11" height="15" viewBox="0 0 11 15"><path d="M0.5 1.5Q0.5 0.5 1.5 0.5H7L10.5 4V13.5Q10.5 14.5 9.5 14.5H1.5Q0.5 14.5 0.5 13.5Z" fill="#fff" stroke="#b8b8b8"/><path d="M7 0.5V4H10.5" fill="none" stroke="#c8c8c8"/></svg></div><div style="position:absolute;left:32px;top:2px;font-size:12px;letter-spacing:0.12px;color:#151515">Registro server web</div></div><div class="a" style="left:613px;top:538px;width:183px;height:18px;overflow:hidden;white-space:nowrap"><div style="position:absolute;left:2px;top:2px"><svg width="11" height="15" viewBox="0 0 11 15"><path d="M0.5 1.5Q0.5 0.5 1.5 0.5H7L10.5 4V13.5Q10.5 14.5 9.5 14.5H1.5Q0.5 14.5 0.5 13.5Z" fill="#fff" stroke="#b8b8b8"/><path d="M7 0.5V4H10.5" fill="none" stroke="#c8c8c8"/></svg></div><div style="position:absolute;left:32px;top:2px;font-size:12px;letter-spacing:0.12px;color:#151515">Servizio FTP</div></div><div class="a" style="left:613px;top:556px;width:183px;height:18px;overflow:hidden;white-space:nowrap"><div style="position:absolute;left:2px;top:2px"><svg width="11" height="15" viewBox="0 0 11 15"><path d="M0.5 1.5Q0.5 0.5 1.5 0.5H7L10.5 4V13.5Q10.5 14.5 9.5 14.5H1.5Q0.5 14.5 0.5 13.5Z" fill="#fff" stroke="#b8b8b8"/><path d="M7 0.5V4H10.5" fill="none" stroke="#c8c8c8"/></svg></div><div style="position:absolute;left:32px;top:2px;font-size:12px;letter-spacing:0.12px;color:#151515">Log servizio iTunes</div></div><div class="a" style="left:613px;top:574px;width:183px;height:18px;overflow:hidden;white-space:nowrap"><div style="position:absolute;left:2px;top:2px"><svg width="11" height="15" viewBox="0 0 11 15"><path d="M0.5 1.5Q0.5 0.5 1.5 0.5H7L10.5 4V13.5Q10.5 14.5 9.5 14.5H1.5Q0.5 14.5 0.5 13.5Z" fill="#fff" stroke="#b8b8b8"/><path d="M7 0.5V4H10.5" fill="none" stroke="#c8c8c8"/></svg></div><div style="position:absolute;left:32px;top:2px;font-size:12px;letter-spacing:0.12px;color:#151515">Servizio server dei contenuti multimediali</div></div><div class="a" style="left:613px;top:592px;width:183px;height:18px;overflow:hidden;white-space:nowrap"><div style="position:absolute;left:2px;top:2px"><svg width="11" height="15" viewBox="0 0 11 15"><path d="M0.5 1.5Q0.5 0.5 1.5 0.5H7L10.5 4V13.5Q10.5 14.5 9.5 14.5H1.5Q0.5 14.5 0.5 13.5Z" fill="#fff" stroke="#b8b8b8"/><path d="M7 0.5V4H10.5" fill="none" stroke="#c8c8c8"/></svg></div><div style="position:absolute;left:32px;top:2px;font-size:12px;letter-spacing:0.12px;color:#151515">Registro di backup</div></div>
<svg class="a" style="left:617px;top:790px" width="36" height="14" viewBox="0 0 36 14"><path d="M1 7L10 1.5V12.5Z" fill="#5a5a5a"/><path d="M24.5 1.5L33.5 7L24.5 12.5Z" fill="#5a5a5a"/></svg>
<div class="a" style="left:807px;top:483px;width:427px;height:322px;background:#fff;border:1px solid #777;overflow:hidden">
 <pre style="position:absolute;left:8px;top:10px;font-family:'Liberation Mono',monospace;font-size:11.85px;line-height:15px;color:#111;-webkit-text-stroke:0.2px #222">[    0.000000] Booting Linux on physical CPU 0x0
[    0.000000] Initializing cgroup subsys cpuset
[    0.000000] Initializing cgroup subsys cpu
[    0.000000] Initializing cgroup subsys cpuacct
[    0.000000] Linux version 3.10.24-rtk-nas-g2bcd96c
(ken@KensComp) (gcc version 4.9.2 20140904 (prerelease)
(crosstool-NG linaro-1.13.1-4.9-2014.09 - Linaro GCC
4.9-2014.09) ) #251 SMP PREEMPT Wed Sep 30 11:07:48 CST
2015
[    0.000000] CPU: ARMv7 Processor [410fc075] revision
5 (ARMv7), cr=50c53c7d
[    0.000000] CPU: PIPT / VIPT nonaliasing data cache,
VIPT aliasing instruction cache
[    0.000000] Machine: phoenix, model: Realtek_CA7_CA7
[    0.000000] bootconsole [earlycon0] enabled
[    0.000000] remove memory (1048576 bytes at
0x18000000)
[    0.000000] remove memory (16777216 bytes at
0x18100000)
[    0.000000] remove memory (1048576 bytes at
0x10000000)</pre>
 <div style="position:absolute;left:410px;top:0;width:15px;height:320px;background:#eeeeee"></div>
 <div style="position:absolute;left:410px;top:18px;width:15px;height:30px;background:#c8c8c8"></div>
 <svg style="position:absolute;left:413px;top:4px" width="9" height="6" viewBox="0 0 9 6"><path d="M1 5L4.5 1.5L8 5" fill="none" stroke="#aaa" stroke-width="1.5"/></svg>
 <svg style="position:absolute;left:413px;top:308px" width="9" height="6" viewBox="0 0 9 6"><path d="M1 1L4.5 4.5L8 1" fill="none" stroke="#555" stroke-width="1.6"/></svg>
</div>
<div class="a pill" style="left:813px;top:823px">Cancella</div>
<div class="a pill" style="left:932px;top:823px">Aggiorna</div>
<svg class="a" style="left:1228px;top:862px" width="13" height="13" viewBox="0 0 13 13"><path d="M12 2L2 12M12 6L6 12M12 10L10 12" stroke="#666" stroke-width="1"/><path d="M12 3L3 12M12 7L7 12" stroke="#fff" stroke-width="0.8"/></svg>
<svg class="a" style="left:716px;top:497px" width="20" height="26" viewBox="0 0 20 26"><path d="M5.5 12.5V2.2Q5.5 0.6 7.2 0.6Q9 0.6 9 2.2V7.5Q11 5.8 12.5 7.2Q14.5 6 15.8 7.8Q17.8 7.2 17.8 9.5V16Q17.8 23.5 11 23.5Q7.5 23.5 5 19.5L1.2 14.5Q0.3 13 1.8 12.6Q3.5 12.2 5.5 14.5Z" fill="#fff" stroke="#111" stroke-width="1.1" stroke-linejoin="round"/><path d="M9 7.5V12M12.5 7.2V12M15.8 7.8V12" stroke="#111" stroke-width="0.9"/></svg>
<!--/DIALOG-->

<!--DOCK-->
<div class="a" style="left:2px;top:1016px;width:1916px;height:24px;background:linear-gradient(#c6c6c6,#aaaaaa);border-top:1px solid #6e6e6e;border-bottom:2px solid #444"></div>
<svg class="a" style="left:8px;top:1019px" width="14" height="14" viewBox="0 0 14 14"><circle cx="7" cy="7" r="6.2" fill="#2c5a28"/><rect x="5.8" y="2.5" width="2.4" height="2" fill="#fff"/><rect x="5.8" y="5.5" width="2.4" height="5.5" fill="#fff"/></svg>
<div class="a" style="left:27px;top:1019px;font-size:12px;letter-spacing:0.12px;color:#2a2a2a">undefined elementi.</div>
<div class="a" style="left:1820px;top:673px;width:96px;height:365px;background:#f4f4f4;border:1px solid #cfcfcf;border-bottom:none"></div>
<div class="a" style="left:1820px;top:673px;width:96px;height:18px;background:linear-gradient(#f4f4f4,#d6d6d6);border:1px solid #cfcfcf"></div>
<svg class="a" style="left:1825px;top:677px" width="10" height="10" viewBox="0 0 10 10"><path d="M3 1L0.8 3.2L3 5.4M0.8 3.2H5Q8 3.2 8 6.5V9" fill="none" stroke="#444" stroke-width="1.1"/></svg>
<svg class="a" style="left:1903px;top:677px" width="8" height="10" viewBox="0 0 8 10"><path d="M4 0.5L7 4H1Z" fill="#444"/><path d="M4 5.5L7 9H1Z" fill="#444"/></svg>
<div class="a" style="left:1828px;top:698px;width:78px;height:78px;background:#fafafa;border:1px solid #d4d4d4;border-radius:5px"></div><div class="a" style="left:1828px;top:780px;width:78px;height:78px;background:#fafafa;border:1px solid #d4d4d4;border-radius:5px"></div><div class="a" style="left:1828px;top:862px;width:78px;height:78px;background:#fafafa;border:1px solid #d4d4d4;border-radius:5px"></div><div class="a" style="left:1828px;top:944px;width:78px;height:78px;background:#fafafa;border:1px solid #d4d4d4;border-radius:5px"></div>
<svg class="a" style="left:1827px;top:696px" width="80" height="80" viewBox="0 0 80 80"><ellipse cx="40" cy="72" rx="26" ry="2.5" fill="url(#shad)"/><path d="M49.5 8H64.5V30H49.5Z" fill="#f2e8d4" stroke="#444" stroke-width="0.9"/><rect x="49.5" y="8" width="15" height="3.5" fill="#888"/><path d="M16.5 35L40 14L63.8 35V71.5H16.5Z" fill="url(#house)" stroke="#333" stroke-width="1"/><path d="M6.5 36L40 7.3L73.5 36H66L40 14L14 36Z" fill="#8e3e16" stroke="#3a1608" stroke-width="0.9" stroke-linejoin="round"/><rect x="37.2" y="42" width="10.8" height="29.5" fill="#4a1e0e" stroke="#2a1006" stroke-width="0.8"/><circle cx="45" cy="57" r="1.4" fill="#f4e4a0"/></svg>
<svg class="a" style="left:1827px;top:778px" width="80" height="80" viewBox="0 0 80 80"><ellipse cx="40.3" cy="73.5" rx="28" ry="3" fill="url(#shad)"/><circle cx="40.3" cy="40.8" r="32" fill="#d4e8ff"/><circle cx="40.3" cy="40.8" r="31" fill="url(#playg)"/><circle cx="40.3" cy="40.8" r="23.5" fill="#fff"/><path d="M32 26L57.5 41L32 55.5Z" fill="#2252ee"/></svg>
<svg class="a" style="left:1827px;top:860px" width="80" height="80" viewBox="0 0 80 80"><use href="#sdisk"/><use href="#gear1"/></svg>
<svg class="a" style="left:1827px;top:942px" width="80" height="80" viewBox="0 0 80 80"><ellipse cx="40.3" cy="73.5" rx="25" ry="2.5" fill="url(#shad)"/><path d="M32.69 18.57L34.83 9.47A31.8 31.8 0 0 1 45.77 9.47L47.91 18.57A23.5 23.5 0 0 1 50.64 19.70L58.59 14.78A31.8 31.8 0 0 1 66.32 22.51L61.40 30.46A23.5 23.5 0 0 1 62.53 33.19L71.63 35.33A31.8 31.8 0 0 1 71.63 46.27L62.53 48.41A23.5 23.5 0 0 1 61.40 51.14L66.32 59.09A31.8 31.8 0 0 1 58.59 66.82L50.64 61.90A23.5 23.5 0 0 1 47.91 63.03L45.77 72.13A31.8 31.8 0 0 1 34.83 72.13L32.69 63.03A23.5 23.5 0 0 1 29.96 61.90L22.01 66.82A31.8 31.8 0 0 1 14.28 59.09L19.20 51.14A23.5 23.5 0 0 1 18.07 48.41L8.97 46.27A31.8 31.8 0 0 1 8.97 35.33L18.07 33.19A23.5 23.5 0 0 1 19.20 30.46L14.28 22.51A31.8 31.8 0 0 1 22.01 14.78L29.96 19.70A23.5 23.5 0 0 1 32.69 18.57Z" fill="url(#gearg)" stroke="#555566" stroke-width="1.1" stroke-linejoin="round"/><circle cx="40.3" cy="40.8" r="19" fill="none" stroke="#c0ccf4" stroke-width="1"/><circle cx="40.3" cy="40.8" r="12.5" fill="#fafafa" stroke="#555" stroke-width="1"/><circle cx="40.3" cy="40.8" r="13.6" fill="none" stroke="#e8eefc" stroke-width="1"/></svg>
<div class="a" style="left:1821px;top:1017px;width:95px;height:21px;background:rgba(235,235,235,0.78)"></div>
<div class="a" style="left:1790px;top:1025px;width:103px;height:2px;background:linear-gradient(90deg,#555 0,#555 30%,#aaa 30%,#aaa 100%)"></div>
<svg class="a" style="left:1801px;top:1019px" width="14" height="14" viewBox="0 0 14 14"><circle cx="7" cy="7" r="6" fill="#f4f4f4" stroke="#888" stroke-width="0.8"/><circle cx="7" cy="7" r="4" fill="none" stroke="#ddd" stroke-width="1"/><circle cx="7" cy="6.5" r="1.5" fill="#333"/></svg>
<svg class="a" style="left:1900px;top:1022px" width="16" height="15" viewBox="0 0 16 15"><path d="M15 1L2 14M15 5L6 14M15 9L10 14" stroke="#555" stroke-width="1.1"/><path d="M15 2.5L3.5 14M15 6.5L7.5 14M15 10.5L11.5 14" stroke="#fff" stroke-width="0.7"/></svg>
<!-- watermark -->
<svg class="a" style="left:1620px;top:965px;opacity:0.88" width="90" height="80" viewBox="0 0 90 80"><defs><linearGradient id="wm" x1="1" y1="0" x2="0" y2="1"><stop offset="0" stop-color="#ffffff"/><stop offset="0.4" stop-color="#c8d6f6"/><stop offset="1" stop-color="#6a82c8"/></linearGradient></defs><g transform="matrix(0.98 0.22 -0.33 0.95 33 12)"><rect x="0" y="0" width="48" height="48" rx="6" fill="url(#wm)" stroke="#c4c4c4" stroke-width="2.4"/></g><path d="M38 27L54 47M33 41L61 31" stroke="#fff" stroke-width="5" stroke-linecap="round"/></svg>
<div class="a" style="left:1702px;top:994px;font-size:23.5px;letter-spacing:0px;color:rgba(125,142,198,0.8);-webkit-text-stroke:0.3px rgba(125,142,198,0.6);mix-blend-mode:multiply;transform:scaleX(0.815);transform-origin:0 0;white-space:nowrap">xtremehardware.com</div>
<!--/DOCK-->
<div id="leftedge" class="a"></div>
<div id="rightedge" class="a"></div>
</body></html>
